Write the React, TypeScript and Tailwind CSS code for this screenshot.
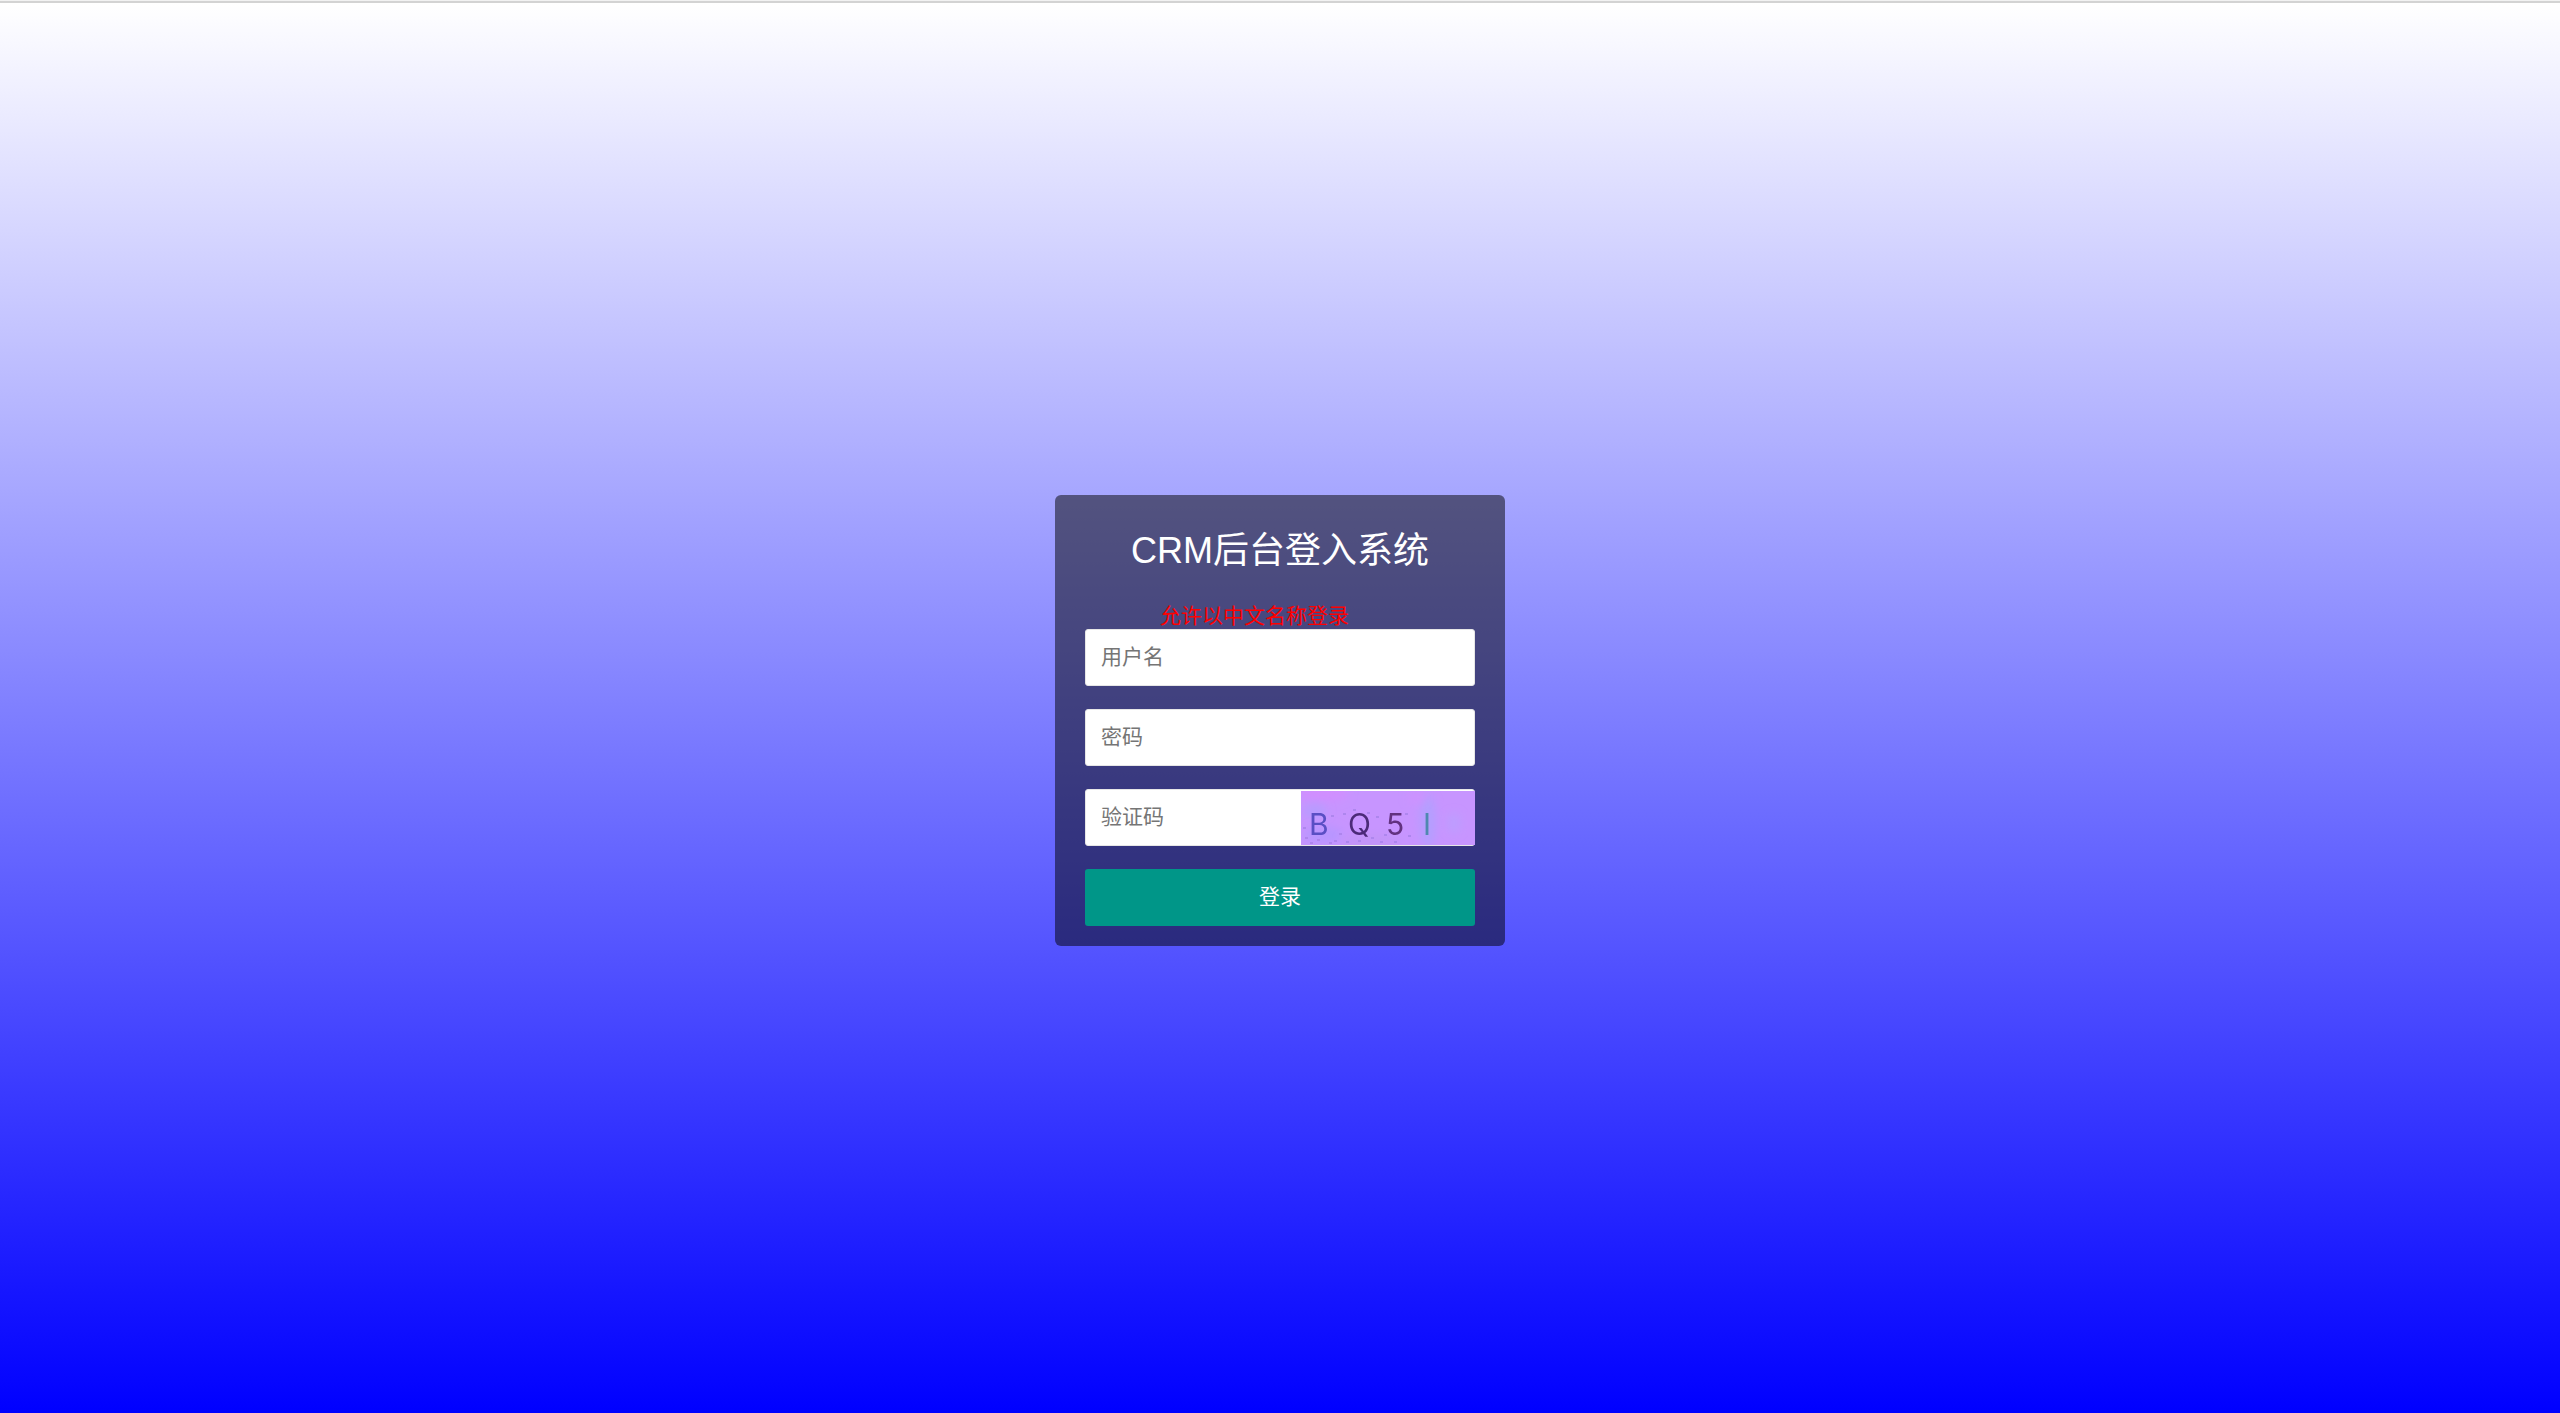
import { useState } from "react";

const fieldClass =
  "block h-[57px] w-full rounded-[3px] border border-[#e6e6e6] bg-white pl-[15px] pr-4 text-[21px] text-[#333] outline-none placeholder:text-[#757575]";

const captcha = [
  { char: "B", x: 8, color: "#5a4fc4" },
  { char: "Q", x: 47, color: "#4c2a78" },
  { char: "5", x: 85, color: "#62307f" },
  { char: "I", x: 122, color: "#5088b0" },
];

const blobs = [
  { x: 22, y: 2, rx: 26, ry: 9, color: "#d08fff" },
  { x: 14, y: 20, rx: 12, ry: 7, color: "#b79bff" },
  { x: 22, y: 44, rx: 20, ry: 9, color: "#b896ff" },
  { x: 70, y: 50, rx: 30, ry: 7, color: "#c295f8" },
  { x: 127, y: 30, rx: 8, ry: 26, color: "#b49fff" },
  { x: 153, y: 32, rx: 7, ry: 10, color: "#bd9dff" },
  { x: 115, y: 6, rx: 9, ry: 6, color: "#cd93ff" },
];

const specks = [
  [4, 46], [9, 51], [30, 24], [33, 49], [38, 42], [42, 22], [45, 50], [52, 18],
  [57, 49], [66, 21], [70, 46], [75, 25], [79, 50], [83, 43], [93, 50], [104, 22],
  [107, 44], [28, 51], [16, 48], [2, 36],
];

function CaptchaPicture() {
  return (
    <svg viewBox="0 0 174 54" className="block h-[54px] w-[174px] bg-[#c795ff]" role="img" aria-label="BQ5I">
      <defs>
        <filter id="haze" x="-50%" y="-50%" width="200%" height="200%">
          <feGaussianBlur stdDeviation="4" />
        </filter>
        <filter id="soft">
          <feGaussianBlur stdDeviation="0.6" />
        </filter>
      </defs>
      {blobs.map((b) => (
        <ellipse key={`${b.x}-${b.y}`} cx={b.x} cy={b.y} rx={b.rx} ry={b.ry} fill={b.color} filter="url(#haze)" />
      ))}
      <g filter="url(#soft)">
        {specks.map(([x, y]) => (
          <rect key={`${x}-${y}`} x={x} y={y} width="3" height="2" fill="#ae86ee" />
        ))}
        {captcha.map((c) => (
          <text key={c.char} x={c.x} y="44" fill={c.color} fontSize="30" fontWeight="400" fontFamily="Inter, sans-serif">
            {c.char}
          </text>
        ))}
      </g>
    </svg>
  );
}

export default function App() {
  const [user, setUser] = useState("");
  const [password, setPassword] = useState("");
  const [code, setCode] = useState("");

  return (
    <div className="flex min-h-screen flex-col font-['Liberation_Sans','Noto_Sans_CJK_SC',sans-serif]">
      <div className="h-[3px] border-b-2 border-[#d3d3d3] bg-[#f2f2f2]" />
      <main className="flex flex-1 items-center justify-center bg-linear-to-b/srgb from-white to-[#0000ff] pt-6">
        <form
          className="w-[450px] rounded-md bg-black/50 px-[30px] pb-5 pt-[30px]"
          onSubmit={(e) => e.preventDefault()}
        >
          <h1 className="text-center text-[36px] leading-[52px] text-white">CRM后台登入系统</h1>
          <p className="mt-[26px] pl-[75px] text-[21px] leading-[26px] text-[#ff0000]">允许以中文名称登录</p>
          <div className="flex flex-col gap-[23px]">
            <input
              className={fieldClass}
              type="text"
              aria-label="用户名"
              placeholder="用户名"
              value={user}
              onChange={(e) => setUser(e.target.value)}
            />
            <input
              className={fieldClass}
              type="password"
              aria-label="密码"
              placeholder="密码"
              value={password}
              onChange={(e) => setPassword(e.target.value)}
            />
            <div className="relative">
              <input
                className={fieldClass}
                type="text"
                aria-label="验证码"
                placeholder="验证码"
                value={code}
                onChange={(e) => setCode(e.target.value)}
              />
              <button type="button" aria-label="BQ5I" className="absolute bottom-px right-0 block">
                <CaptchaPicture />
              </button>
            </div>
            <button type="submit" className="h-[57px] w-full rounded-[3px] bg-[#009688] text-[21px] text-white">
              登录
            </button>
          </div>
        </form>
      </main>
    </div>
  );
}
